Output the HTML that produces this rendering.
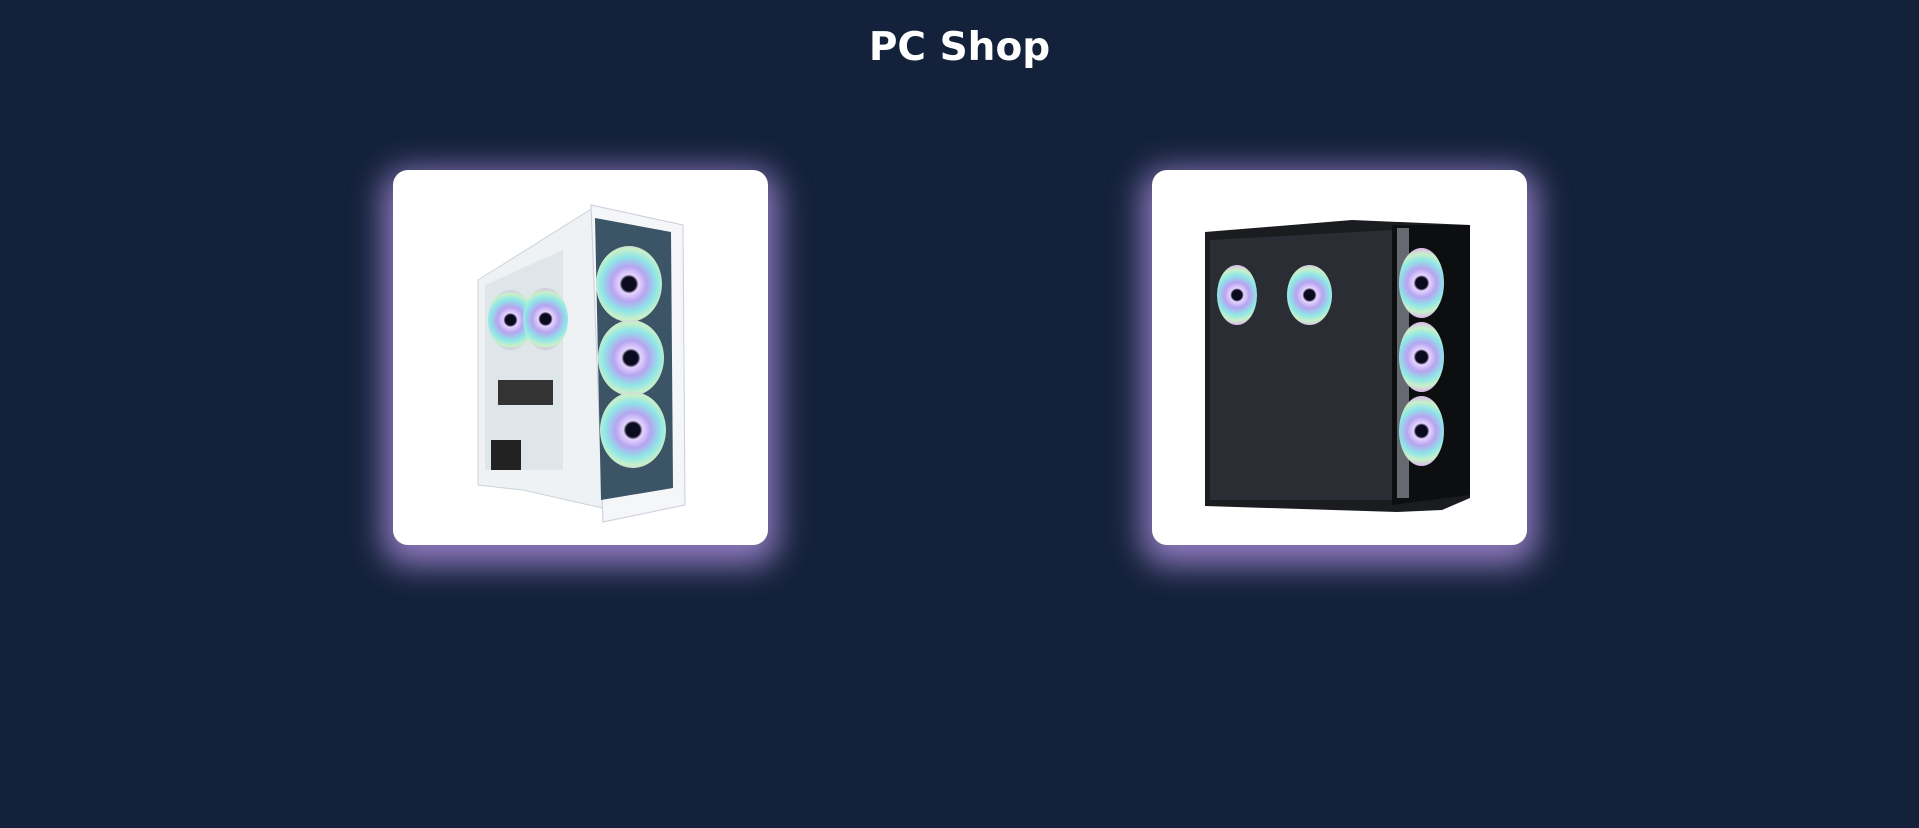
<!DOCTYPE html>
<html><head><style>
html,body{margin:0;height:100%;}
body{background:#13213a;width:1919px;height:828px;position:relative;overflow:hidden;font-family:"DejaVu Sans",Verdana,sans-serif;}
h1{position:absolute;top:21px;left:0;width:1919px;text-align:center;margin:0;color:#fff;font-size:39px;font-weight:bold;line-height:54px;}
.card{position:absolute;top:170px;width:375px;height:375px;background:#fff;border-radius:15px;box-shadow:0 10px 32px 10px rgba(175,145,225,0.8);overflow:hidden;}
.fan{position:absolute;border-radius:50%;background:radial-gradient(circle,#0b0b20 0 14%,#e6d4ff 19%,#b6a4f0 35%,#8fe6e8 55%,#c8f0c8 70%,#e0b0f0 85%);}
</style></head><body>
<h1>PC Shop</h1>
<div class="card" style="left:393px">
 <svg width="375" height="375" style="position:absolute;left:0;top:0">
  <polygon points="85,110 200,38 240,45 240,345 130,320 85,315" fill="#eef2f5" stroke="#ccd3d8"/>
  <polygon points="92,115 170,80 170,300 92,300" fill="#dfe6ea"/>
  <rect x="98" y="270" width="30" height="30" fill="#222"/>
  <rect x="105" y="210" width="55" height="25" fill="#333"/>
  <polygon points="198,35 290,55 292,335 210,352" fill="#f4f6f8" stroke="#ccd"/>
  <polygon points="202,48 278,62 280,318 208,330" fill="#3b5566"/>
 </svg>
 <div class="fan" style="left:203px;top:76px;width:66px;height:76px"></div>
 <div class="fan" style="left:205px;top:150px;width:66px;height:76px"></div>
 <div class="fan" style="left:207px;top:222px;width:66px;height:76px"></div>
 <div class="fan" style="left:95px;top:120px;width:45px;height:60px"></div>
 <div class="fan" style="left:130px;top:118px;width:45px;height:62px"></div>
</div>
<div class="card" style="left:1152px">
 <svg width="375" height="375" style="position:absolute;left:0;top:0">
  <polygon points="53,62 200,50 318,55 318,328 290,340 245,342 53,336" fill="#1a1c20"/>
  <polygon points="58,70 240,60 240,330 58,330" fill="#2a2e34"/>
  <polygon points="240,55 318,55 318,325 240,335" fill="#0d0e10"/>
  <rect x="245" y="58" width="12" height="270" fill="#666a70"/>
 </svg>
 <div class="fan" style="left:247px;top:78px;width:45px;height:70px"></div>
 <div class="fan" style="left:247px;top:152px;width:45px;height:70px"></div>
 <div class="fan" style="left:247px;top:226px;width:45px;height:70px"></div>
 <div class="fan" style="left:65px;top:95px;width:40px;height:60px"></div>
 <div class="fan" style="left:135px;top:95px;width:45px;height:60px"></div>
</div>
</body></html>
